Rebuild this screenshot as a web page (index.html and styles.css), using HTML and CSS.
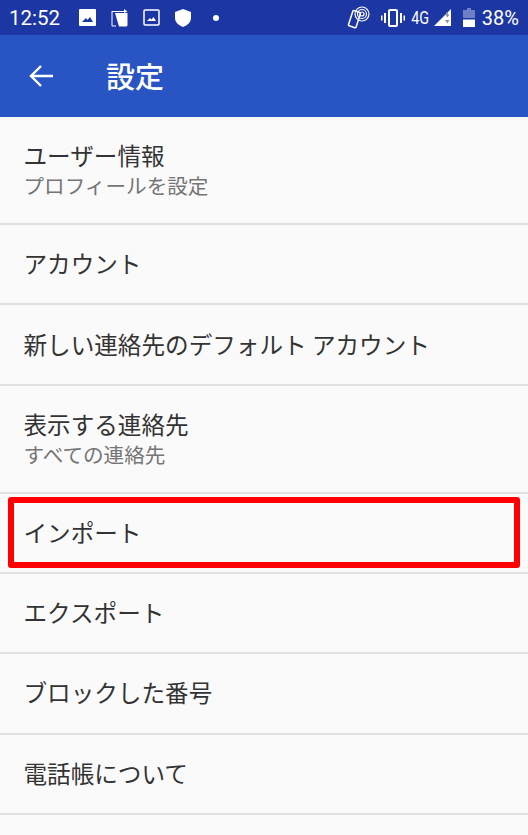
FILE: index.html
```html
<!DOCTYPE html>
<html lang="ja">
<head>
  <meta charset="UTF-8">
  <title>設定</title>
  <link rel="stylesheet" href="styles.css">
</head>
<body>

  <div class="status-bar">
    <span class="clock">12:52</span>
    <div class="status-left">
      <svg width="17" height="17" viewBox="0 0 17 17"><path fill="#fff" fill-rule="evenodd" d="M1 0h15a1 1 0 0 1 1 1v15a1 1 0 0 1-1 1H1a1 1 0 0 1-1-1V1a1 1 0 0 1 1-1zM3 13h11l-3-5-2.500 3L7 9z"/></svg>
      <svg width="17" height="18" viewBox="0 0 17 18"><path fill="none" stroke="#fff" d="M1 2.500h12M1 2v15h4"/><path fill="#fff" d="M4 4h12.500v12a1.500 1.500 0 0 1-1.500 1.500H8z"/><path fill="#fff" d="M13 0l3.500 2.500L13 4z"/></svg>
      <svg width="17" height="17" viewBox="0 0 17 17"><rect x="1" y="1" width="15" height="15" rx="1" fill="none" stroke="#fff" stroke-width="1.500"/><path fill="#fff" d="M4 12h9l-2.500-4-2 2.500L7 9z"/></svg>
      <svg width="16" height="18" viewBox="0 0 16 18"><path fill="#fff" d="M8 0l8 3v6c0 4-3.500 7.500-8 9-4.500-1.500-8-5-8-9V3z"/></svg>
      <span class="dot"></span>
    </div>
    <div class="status-right">
      <svg width="24" height="23" viewBox="0 0 24 23"><g fill="none" stroke="#fff" stroke-width="1.200"><rect x="3.500" y="5" width="8" height="16" rx="1" transform="rotate(18 7 13)" stroke-width="1.500"/><circle cx="15" cy="8" r="2"/><circle cx="15" cy="8" r="4.500"/><circle cx="15" cy="8" r="7"/></g></svg>
      <svg class="vibrate" width="24" height="18" viewBox="0 0 24 18"><rect x="8" y="1" width="8" height="16" rx="1" fill="none" stroke="#fff" stroke-width="2"/><path fill="#fff" d="M3 4h2v10H3zM19 4h2v10h-2zM0 6.500h1.500v5H0zM22.500 6.500H24v5h-1.500z"/></svg>
      <span class="net">4G</span>
      <svg class="signal" width="17" height="17" viewBox="0 0 17 17"><path fill="#fff" d="M17 0v17H0z"/><path fill="#8f93a6" d="M11 5.500h1.500V3h1.500v2.500h1.500l-2.200 3zM11 11h4.500l-2.200 3.500z"/></svg>
      <svg class="battery" width="12" height="19" viewBox="0 0 12 19"><path fill="#6f7fc6" d="M4 0h4v2h4v8H0V2h4z"/><path fill="#fff" d="M0 11.500h12V19H0z"/></svg>
      <span class="percent">38%</span>
    </div>
  </div>

  <header class="app-bar">
    <svg class="back" width="26" height="24" viewBox="0 0 26 24"><path fill="none" stroke="#fff" stroke-width="2.400" d="M25 12H3M13 2L3 12l10 10"/></svg>
    <h1>設定</h1>
  </header>

  <ul class="settings">
    <li class="row row-double">
      <span class="label">ユーザー情報</span>
      <span class="sub">プロフィールを設定</span>
    </li>
    <li class="row"><span class="label">アカウント</span></li>
    <li class="row"><span class="label">新しい連絡先のデフォルト アカウント</span></li>
    <li class="row row-double">
      <span class="label">表示する連絡先</span>
      <span class="sub">すべての連絡先</span>
    </li>
    <li class="row highlighted"><span class="label">インポート</span></li>
    <li class="row"><span class="label">エクスポート</span></li>
    <li class="row"><span class="label">ブロックした番号</span></li>
    <li class="row"><span class="label">電話帳について</span></li>
  </ul>

</body>
</html>
```

FILE: styles.css
```css
body {
  margin: 0;
  height: 835px;
  overflow: hidden;
  background-color: #fafafa;
  font-family: "Noto Sans CJK JP", Roboto, sans-serif;
  color: #333;
}

.status-bar {
  height: 35px;
  background-color: #1c36a3;
  color: white;
  font-family: Roboto, sans-serif;
  display: flex;
  align-items: center;
  padding: 0 9px 0 10px;
}

.clock {
  font-size: 20.500px;
  width: 67px;
  margin-left: -1px;
}

.status-left {
  display: flex;
  align-items: center;
  gap: 15px;
  margin-left: 3px;
}

.dot {
  width: 6px;
  height: 6px;
  margin-left: 7px;
  border-radius: 50%;
  background-color: white;
}

.status-right {
  margin-left: auto;
  display: flex;
  align-items: center;
}

.vibrate {
  margin-left: 10px;
}

.net {
  font-size: 18px;
  margin-left: 4px;
  transform: scaleX(0.8);
}

.signal {
  margin-left: 2px;
}

.battery {
  margin-left: 12px;
}

.percent {
  font-size: 20px;
  margin-left: 7px;
}

.app-bar {
  height: 82px;
  background-color: #2955c4;
  display: flex;
  align-items: center;
  color: white;
}

.back {
  margin-left: 28px;
}

.app-bar h1 {
  margin: -3px 0 0 52px;
  font-size: 29px;
  font-weight: 500;
}

.settings {
  list-style: none;
  margin: 0;
  padding: 0;
}

.row {
  box-sizing: border-box;
  height: 80.200px;
  padding: 0 23.500px 2px;
  display: flex;
  flex-direction: column;
  justify-content: center;
  border-bottom: 2px solid #e0e0e0;
}

.row-double {
  height: 108.300px;
}

.label {
  font-size: 23.600px;
  line-height: 32px;
}

.sub {
  font-size: 20.600px;
  line-height: 28px;
  color: #757575;
}

.highlighted {
  position: relative;
}

.highlighted::after {
  content: "";
  position: absolute;
  left: 8px;
  right: 8px;
  top: 3px;
  bottom: 4px;
  border: 6px solid #ff0000;
  border-radius: 3px;
}
```
